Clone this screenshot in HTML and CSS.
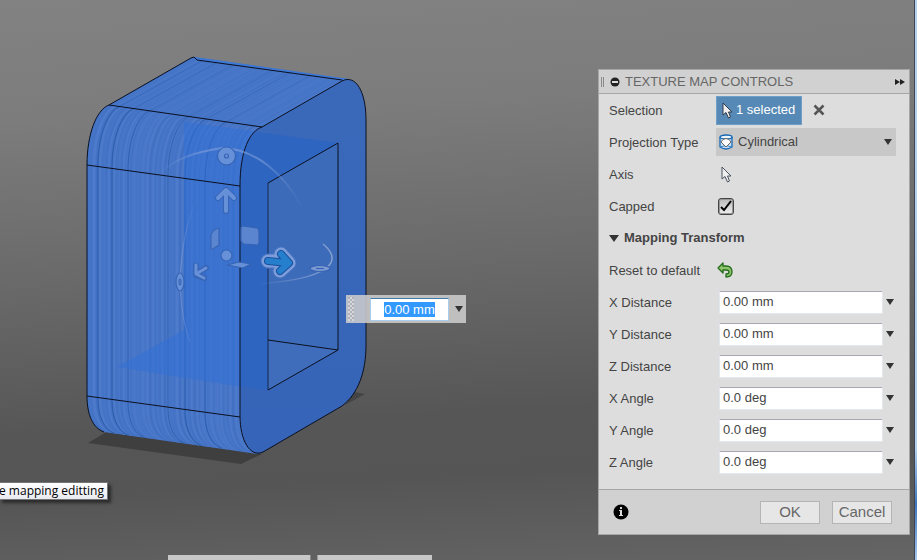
FILE: index.html
```html
<!DOCTYPE html>
<html lang="en">
<head>
<meta charset="utf-8">
<title>Texture Map Controls</title>
<link rel="stylesheet" href="styles.css">
</head>
<body>
<main class="viewport">
  <svg class="model" width="480" height="480" viewBox="0 0 480 480" aria-hidden="true">
    <defs>
      <clipPath id="skin"><path d="M104 432C93 428 87 415 87 396V165C87 135 96 110 109 105L191 58L194 57L345 78L262 127C250 131 240 150 240 186V416C240 436 246 450 257 454Z"/></clipPath>
      <path id="profile" d="M104 432C93 428 87 415 87 396V165C87 135 96 110 109 105L194 58"/>
      <linearGradient id="side" x1="0" y1="0" x2="0" y2="1"><stop offset="0" stop-color="#3b69ba"/><stop offset="1" stop-color="#3564b8"/></linearGradient>
      <linearGradient id="arc" x1="160" y1="0" x2="304" y2="0" gradientUnits="userSpaceOnUse"><stop offset="0" stop-color="#8fa9dc" stop-opacity="0"/><stop offset=".3" stop-color="#8fa9dc" stop-opacity=".5"/><stop offset=".7" stop-color="#8fa9dc" stop-opacity=".5"/><stop offset="1" stop-color="#8fa9dc" stop-opacity="0"/></linearGradient>
      <linearGradient id="arc-left" x1="0" y1="196" x2="0" y2="342" gradientUnits="userSpaceOnUse"><stop offset="0" stop-color="#8fa9dc" stop-opacity="0"/><stop offset=".5" stop-color="#8fa9dc" stop-opacity=".6"/><stop offset="1" stop-color="#8fa9dc" stop-opacity=".2"/></linearGradient>
      <linearGradient id="arc-right" x1="257" y1="0" x2="333" y2="0" gradientUnits="userSpaceOnUse"><stop offset="0" stop-color="#a6b8dc" stop-opacity="0"/><stop offset="1" stop-color="#a6b8dc" stop-opacity=".7"/></linearGradient>
    </defs>
    <path fill="#3f3f3f" d="M88 443L108 431L262 454L241 464Z"/>
    <path fill="#444" d="M354 392L365 394L345 405Z"/>
    <path fill="#4876c8" d="M104 432C93 428 87 415 87 396V165C87 135 96 110 109 105L191 58L194 57L349 79L262 127L257 454Z"/>
    <g id="streaks" clip-path="url(#skin)"></g>
    <path fill="#4776c9" opacity=".55" d="M109 105L194 58L345 80L262 127Z"/>
    <path fill="#3c78d8" d="M194 57L348 79L345 80L194 59Z"/>
    <path fill="url(#side)" d="M240 186C240 150 250 131 262 127L342 81C356 74 366 92 366 120V345C366 372 358 394 342 406L263 452C250 458 240 440 240 416Z"/>
    <path fill="#2d65c1" d="M240 186C240 152 249 135 257 132L338 143L268 183V390L240 386Z"/>
    <path fill="#3c6bb9" d="M268 183L338 143V350L268 390Z"/>
    <path fill="#4170bd" opacity=".5" d="M268 340L338 350L268 390Z"/>
    <path clip-path="url(#skin)" fill="#2f70d8" opacity=".5" d="M184 122L260 132V390L117 367L184 330Z"/>
    <g fill="none" stroke="#0b1020" stroke-width="1">
      <path d="M104 432C93 428 87 415 87 396V165C87 135 96 110 109 105L191 58L194 57"/>
      <path d="M194 57L197 60L342 80"/>
      <path d="M109 105L262 127M87 165L240 186M87 396L240 417"/>
      <path d="M262 127C250 131 240 150 240 186V416C240 440 250 458 263 452L342 406C358 394 366 372 366 345V120C366 92 356 74 342 81Z"/>
      <path d="M268 183L338 143V350L268 390M268 340L338 350"/>
      <path stroke-opacity=".7" d="M268 183V390"/>
    </g>
    <g fill="none">
      <path stroke="url(#arc)" stroke-width="2" d="M160 173C176 158 196 152 222 148C256 149 284 174 302 207"/>
      <path stroke="url(#arc-left)" d="M197 196C179 242 174 298 190 342"/>
      <path stroke="url(#arc-right)" stroke-width="1.500" d="M323 244C344 261 331 279 257 284"/>
    </g>
    <g fill="#6690d7" stroke="#3764b5" stroke-width="1.200" stroke-linejoin="round">
      <circle cx="226.500" cy="156" r="9"/><circle cx="226.500" cy="156" r="2"/>
      <path fill="#5b85cf" d="M219 228V245Q212 250 211 249V235Q212 230 219 228Z"/>
      <path fill="#5b85cf" d="M243 226L257 228Q259 229 259 232V242Q259 245 257 245L244 244Q241 243 241 240V229Q241 226 243 226Z"/>
      <circle cx="226.500" cy="255.500" r="5.500"/>
      <path d="M227 265L239 262L251 264L243 268Z"/>
      <ellipse cx="180" cy="282" rx="4" ry="9"/><ellipse cx="180" cy="282" rx="1" ry="3"/>
      <ellipse fill="#7c99d0" cx="320" cy="268.500" rx="10" ry="3"/><path d="M316 268.500H324"/>
    </g>
    <g fill="none" stroke-linecap="round" stroke-linejoin="round">
      <path stroke="#3764b5" stroke-width="6" d="M226 190V211M218 198L226 190L234 198M196 266V275L204 278M196 274L206 268"/>
      <path stroke="#6690d7" stroke-width="4" d="M226 190V211M218 198L226 190L234 198"/>
      <path stroke="#6690d7" stroke-width="3" d="M196 265V274L204 278M196 274L206 268"/>
      <path stroke="#4773c0" stroke-width="15" d="M268 261H282M281 254L289 263L280 271"/>
      <path stroke="#7e9edb" stroke-width="13" d="M268 261H285M281 254L289 263L280 271"/>
      <path stroke="#194f9d" stroke-width="8" d="M268 261L288 263M281 254L289 263L280 271"/>
      <path stroke="#257fcc" stroke-width="6" d="M268 261L288 263M281 254L289 263L280 271"/>
    </g>
  </svg>

  <div class="hud">
    <span class="grip"></span>
    <input class="hud-input" type="text" value="0.00 mm" aria-label="Distance">
    <button class="hud-more" type="button" aria-label="Distance options"><span class="caret"></span></button>
  </div>

  <div class="tooltip" role="tooltip"><span>e mapping editting</span></div>
  <div class="dock"><span class="dock-left"></span><span class="dock-right"></span></div>
  <div class="window-edge"></div>

  <form class="panel">
    <header class="panel-head">
      <span class="panel-grip"></span>
      <button class="plain" type="button" aria-label="Collapse"><svg width="10" height="10" viewBox="0 0 10 10"><circle cx="5" cy="5" r="4.500" fill="#222"/><path d="M2 5H8" stroke="#ddd" stroke-width="2"/></svg></button>
      <h1 class="title">TEXTURE MAP CONTROLS</h1>
      <button class="plain" type="button" aria-label="Expand"><svg width="10" height="8" viewBox="0 0 10 8"><path fill="#222" d="M0 1L5 4L0 7ZM5 1L10 4L5 7Z"/></svg></button>
    </header>
    <div class="rows">
      <div class="row">
        <span class="label">Selection</span>
        <button class="selected" type="button"><svg width="11" height="17" viewBox="0 0 11 17"><path d="M1 1V13L4 10.500L6.500 16L8.500 15L6.500 10H10Z" fill="#eee" stroke="#333b48"/></svg>1 selected</button>
        <button class="plain clear" type="button" aria-label="Clear selection"><svg width="12" height="12" viewBox="0 0 12 12"><path d="M1.500 1.500L10.500 10.500M10.500 1.500L1.500 10.500" stroke="#555" stroke-width="2.500"/></svg></button>
      </div>
      <div class="row">
        <label class="label" for="projection">Projection Type</label>
        <div class="select-box">
          <svg class="select-icon" width="14" height="16" viewBox="0 0 14 16"><path d="M1 3V13Q7 17 13 13V3" fill="#c9def2" stroke="#1769b5" stroke-width="1.300"/><ellipse cx="7" cy="3" rx="6" ry="2" fill="#eef5fb" stroke="#1769b5" stroke-width="1.300"/><path d="M1 13Q7 10 13 13" fill="none" stroke="#3b86c9"/><path d="M2 8L4 5.500L7 4.500L10 5.500L12 8L7 13Z" fill="#fff" stroke="#666"/></svg>
          <select id="projection" class="select"><option>Cylindrical</option></select>
          <span class="caret select-caret"></span>
        </div>
      </div>
      <div class="row">
        <span class="label">Axis</span>
        <button class="plain axis" type="button" aria-label="Select axis"><svg width="11" height="17" viewBox="0 0 11 17"><path d="M1 1V13L4 10.500L6.500 16L8.500 15L6.500 10H10Z" fill="#eee" stroke="#4a5260"/></svg></button>
      </div>
      <div class="row">
        <label class="label" for="capped">Capped</label>
        <span class="check-box"><input class="check" id="capped" type="checkbox" checked><svg class="tick" width="12" height="12" viewBox="0 0 12 12"><path d="M1 7L4 10L11 1" fill="none" stroke="#000" stroke-width="2"/></svg></span>
      </div>
      <h2 class="section"><span class="section-caret"></span>Mapping Transform</h2>
      <div class="row">
        <span class="label">Reset to default</span>
        <button class="plain reset" type="button" aria-label="Reset to default"><svg width="16" height="16" viewBox="0 0 16 16"><path d="M1 6L6 1V4H9Q15 4 15 10Q15 15 9 15V12Q12 12 12 10Q12 8 9 8H6V11Z" fill="#8fc46c" stroke="#246b1c" stroke-width="1.300" stroke-linejoin="round"/></svg></button>
      </div>
      <div class="row"><label class="label" for="xd">X Distance</label><input class="field" id="xd" value="0.00 mm"><button class="plain more" type="button" aria-label="X distance options"><span class="caret"></span></button></div>
      <div class="row"><label class="label" for="yd">Y Distance</label><input class="field" id="yd" value="0.00 mm"><button class="plain more" type="button" aria-label="Y distance options"><span class="caret"></span></button></div>
      <div class="row"><label class="label" for="zd">Z Distance</label><input class="field" id="zd" value="0.00 mm"><button class="plain more" type="button" aria-label="Z distance options"><span class="caret"></span></button></div>
      <div class="row"><label class="label" for="xa">X Angle</label><input class="field" id="xa" value="0.0 deg"><button class="plain more" type="button" aria-label="X angle options"><span class="caret"></span></button></div>
      <div class="row"><label class="label" for="ya">Y Angle</label><input class="field" id="ya" value="0.0 deg"><button class="plain more" type="button" aria-label="Y angle options"><span class="caret"></span></button></div>
      <div class="row"><label class="label" for="za">Z Angle</label><input class="field" id="za" value="0.0 deg"><button class="plain more" type="button" aria-label="Z angle options"><span class="caret"></span></button></div>
    </div>
    <footer class="panel-foot">
      <button class="plain info" type="button" aria-label="Information"><svg width="16" height="16" viewBox="0 0 16 16"><circle cx="8" cy="8" r="7.500" fill="#000"/><path fill="#ddd" d="M7 3H9V5H7ZM6 6H9V11H10V12H6V11H7V7H6Z"/></svg></button>
      <button class="action" type="button">OK</button>
      <button class="action" type="button">Cancel</button>
    </footer>
  </form>
</main>
<script src="scene.js"></script>
</body>
</html>
```
FILE: styles.css
```css
* { box-sizing: border-box; }

body {
  margin: 0;
  font: 13px/16px "Liberation Sans", Arial, sans-serif;
  color: #444;
}

button, input, select { font: inherit; color: inherit; margin: 0; }

.viewport {
  position: relative;
  min-height: 100vh;
  overflow: hidden;
  background: linear-gradient(177deg, #828282 0%, #7c7c7c 20%, #6a6a6a 46%, #565656 72%, #555 82%, #656565 100%);
}

.model { display: block; }

.plain {
  display: flex;
  align-items: center;
  justify-content: center;
  padding: 0;
  border: 0;
  background: none;
}

.caret {
  display: block;
  border: 4px solid transparent;
  border-top: 6px solid #333;
  border-bottom: 0;
}

/* In-canvas distance entry */
.hud {
  position: absolute;
  left: 346px;
  top: 295px;
  display: flex;
  align-items: center;
  width: 120px;
  height: 28px;
  padding: 2px;
  background: rgba(204, 204, 204, .88);
}
.grip {
  width: 6px;
  height: 24px;
  margin-right: 16px;
  background: conic-gradient(#e6e6e6 25%, #aaa 0 50%, #e6e6e6 0 75%, #aaa 0) 0 0 / 4px 4px;
  opacity: .6;
}
.hud-input {
  width: 79px;
  height: 23px;
  padding: 0;
  border: 1px solid #a9cdec;
  border-top-color: #3d7bad;
  background: #fff;
  text-align: center;
  outline: 0;
}
.hud-input::selection { background: #3399ff; color: #fff; }
.hud-more { padding: 0; margin-left: 6px; border: 0; background: none; }

.tooltip {
  position: absolute;
  left: -1px;
  top: 482px;
  padding: 0 3px 0 0;
  border: 1px solid #767676;
  border-left: 0;
  background: linear-gradient(#fff, #e9eaf0);
  box-shadow: 3px 3px 3px rgba(0, 0, 0, .5);
  color: #000;
  font: 12px/16px "Open Sans", sans-serif;
  white-space: nowrap;
}

.dock {
  position: absolute;
  left: 168px;
  bottom: 0;
  display: flex;
  gap: 6px;
}
.dock span { height: 5px; background: #c8c7c8; }
.dock-left { width: 143px; border-right: 1px solid #888; }
.dock-right { width: 115px; border-left: 1px solid #999; }

.window-edge {
  position: absolute;
  top: 0;
  right: 0;
  bottom: 0;
  width: 3px;
  border-left: 1px solid #3f4650;
  background: linear-gradient(#b4d0ee 0 80%, #3f76bd 90%, #a8c8ee);
}

/* Control panel */
.panel {
  position: absolute;
  top: 69px;
  right: 7px;
  width: 312px;
  border: 1px solid #a6a6a8;
  background: #ddd;
}
.panel-head {
  display: flex;
  align-items: center;
  height: 24px;
  padding: 0 4px 0 2px;
  border-bottom: 1px solid #a6a6a8;
  background: #d1d1d1;
}
.panel-grip {
  width: 3px;
  height: 10px;
  margin-right: 6px;
  border: 1px solid #888;
  border-width: 0 1px;
}
.title {
  flex: 1;
  margin: 0 0 0 5px;
  font-size: 13px;
  font-weight: 400;
  color: #666;
}
.rows { padding: 0 13px 11px 10px; }
.row { display: flex; align-items: center; height: 32px; }
.label { flex: 0 0 107px; padding-top: 1px; white-space: nowrap; }

.selected {
  display: flex;
  align-items: center;
  gap: 3px;
  height: 29px;
  padding: 0 6px 0 5px;
  border: 1px solid #6f9fc6;
  background: #5689b5;
  color: #fff;
}
.clear { margin-left: 11px; }

.select-box {
  position: relative;
  display: flex;
  flex: 1;
  height: 28px;
  background: #c8c8c8;
}
.select {
  flex: 1;
  appearance: none;
  padding: 0 20px 0 22px;
  border: 0;
  background: none;
}
.select-icon { position: absolute; left: 3px; top: 6px; }
.select-caret { position: absolute; right: 4px; top: 11px; }

.axis { margin-left: 5px; }
.reset { margin-left: 1px; }

.check-box { position: relative; display: flex; margin-left: 2px; }
.check {
  appearance: none;
  width: 16px;
  height: 17px;
  border: 1px solid #444;
  border-radius: 3px;
  background: linear-gradient(#b8b8b8, #f0f0f0);
  box-shadow: inset 0 0 0 1px #999;
}
.tick { position: absolute; left: 2px; top: 2px; pointer-events: none; }

.section {
  display: flex;
  align-items: center;
  gap: 5px;
  height: 32px;
  margin: 0;
  font-size: 13px;
  font-weight: 700;
}
.section-caret {
  border: 5px solid transparent;
  border-top: 7px solid #333;
  border-bottom: 0;
}

.field {
  flex: 1;
  min-width: 0;
  height: 23px;
  margin-left: 3px;
  padding: 0 3px 2px;
  border: 1px solid #e3e8f0;
  border-top: 1px solid #a5a7b2;
  border-radius: 2px;
  background: #fff;
}
.more { width: 13px; height: 20px; }

.panel-foot {
  display: flex;
  align-items: center;
  gap: 12px;
  height: 45px;
  padding: 0 17px 0 14px;
  border-top: 1px solid #a6a6a8;
  background: #d1d1d1;
}
.info { margin-right: auto; }
.action {
  width: 60px;
  height: 23px;
  padding: 0;
  border: 1px solid #b4b4b4;
  background: #e6e6e6;
  color: #666;
  font-size: 15px;
}
```
FILE: scene.js
```js
// Wood-grain streaks: each one is the body's left profile shifted across its width.
const layer = document.getElementById("streaks");
const tones = ["#2e63b4", "#5f89d4", "#3568ba", "#6189d1", "#3d70c2"];

function streak(offset, width, color, opacity) {
  const use = document.createElementNS("http://www.w3.org/2000/svg", "use");
  use.setAttribute("href", "#profile");
  use.setAttribute("x", offset);
  use.setAttribute("y", offset * 0.14);
  use.setAttribute("fill", "none");
  use.setAttribute("stroke", color);
  use.setAttribute("stroke-width", width);
  use.setAttribute("stroke-opacity", opacity);
  layer.appendChild(use);
}

for (let i = 0; i < 75; i++) {
  streak(i * 37 % 151, 1 + (i % 2), tones[i % 5], 0.15 + (i * 7 % 5) * 0.06);
}
for (const offset of [11, 25, 41, 81, 98, 118]) {
  streak(offset, 1, "#1f539f", 0.65);
}

document.querySelector(".hud-input").select();
```
